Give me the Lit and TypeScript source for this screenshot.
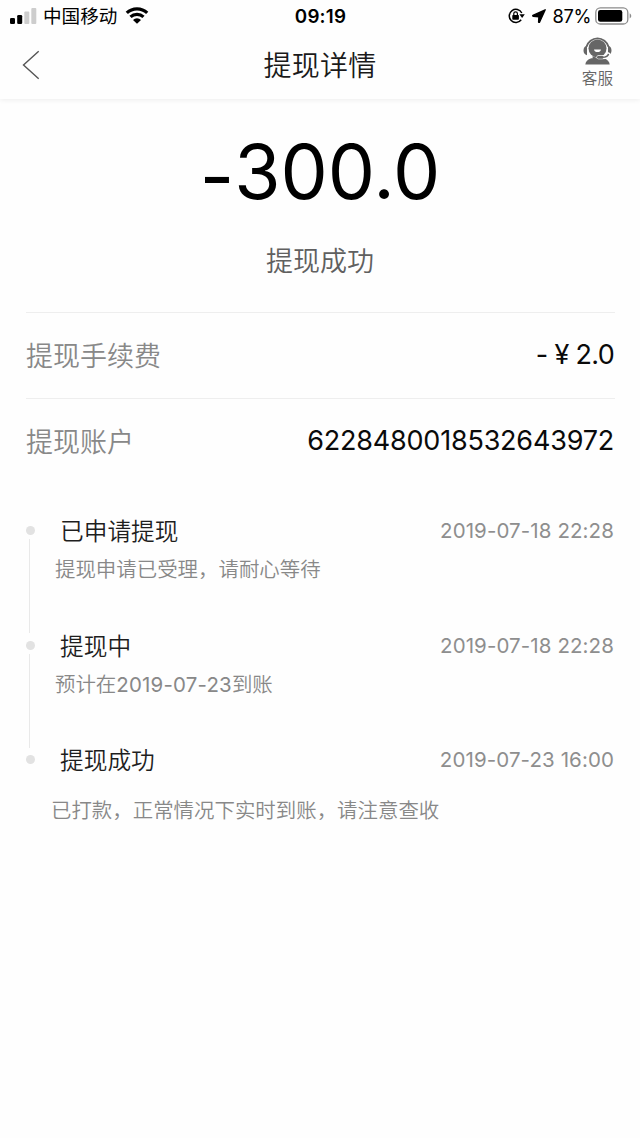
import { LitElement, html, css } from "lit";
import { customElement } from "lit/decorators.js";

interface Step {
  title: string;
  time: string;
  note: unknown;
}

const STEPS: Step[] = [
  { title: "已申请提现", time: "2019-07-18 22:28", note: "提现申请已受理，请耐心等待" },
  { title: "提现中", time: "2019-07-18 22:28", note: html`预计在<span class="date">2019-07-23</span>到账` },
  { title: "提现成功", time: "2019-07-23 16:00", note: "已打款，正常情况下实时到账，请注意查收" },
];

@customElement("status-bar")
class StatusBar extends LitElement {
  static styles = css`
    :host {
      display: grid;
      grid-template-columns: 1fr auto 1fr;
      align-items: center;
      height: 32px;
      padding: 0 9px 0 10px;
      box-sizing: border-box;
      color: #000;
    }
    svg { display: block; flex: none; }
    .left, .right { display: flex; align-items: center; }
    .right { justify-content: flex-end; margin-right: -1px; }
    .carrier { font-size: 18.6px; margin: 0 8px 0 6px; line-height: 32px; }
    .time { font-size: 18.8px; font-weight: 600; letter-spacing: 0.2px; line-height: 30px; padding-top: 2px; }
    .lock { margin-right: 7px; }
    .arrow { margin-right: 7px; }
    .percent { font-size: 18.3px; letter-spacing: -0.4px; margin-right: 4px; line-height: 32px; }
  `;
  render() {
    return html`
      <div class="left">
        <svg width="27" height="18" viewBox="0 0 27 18">
          <rect x="0" y="11" width="5" height="6" rx="1.3" />
          <rect x="7.2" y="8" width="5" height="9" rx="1.3" />
          <rect x="14.3" y="4.5" width="5" height="12.5" rx="1" fill="#cdcdcd" />
          <rect x="21.3" y="1" width="5" height="16" rx="1" fill="#cdcdcd" />
        </svg>
        <span class="carrier">中国移动</span>
        <svg width="24" height="18" viewBox="0 0 24 18">
          <path d="M1.8 5.9a14.7 14.7 0 0 1 20.4 0M5.5 9.9a9.4 9.4 0 0 1 13 0" fill="none" stroke="#000" stroke-width="3.2" />
          <path d="M12 16.8 8 12.9a5.7 5.7 0 0 1 8 0z" />
        </svg>
      </div>
      <span class="time">09:19</span>
      <div class="right">
        <svg class="lock" width="17" height="16" viewBox="0 0 17 16">
          <path d="M13.8 5A6.6 6.6 0 1 0 13.2 11.8" fill="none" stroke="#000" stroke-width="1.5" />
          <path d="M11.4 6.2h5.4l-2.7 3.7z" />
          <rect x="4.3" y="7" width="6.6" height="4.8" rx=".7" />
          <path d="M5.8 7V5.6a1.8 1.8 0 0 1 3.6 0V7" fill="none" stroke="#000" stroke-width="1.2" />
        </svg>
        <svg class="arrow" width="14" height="14" viewBox="0 0 14 14">
          <path d="M13.2.8.9 6.4q-.5.5.2.8l5.8.6-.3 5.3q.4.6.9.1z" stroke="#000" stroke-width="1.4" stroke-linejoin="round" />
        </svg>
        <span class="percent">87%</span>
        <svg width="37" height="18" viewBox="0 0 37 18">
          <rect x=".8" y=".8" width="32" height="16.2" rx="4.6" fill="none" stroke="#8b8b8b" stroke-width="1.3" />
          <rect x="3" y="3" width="24.3" height="11.8" rx="2.3" />
          <path d="M34.7 6.2q3.2 2.7 0 5.4z" fill="#8b8b8b" />
        </svg>
      </div>
    `;
  }
}

@customElement("nav-bar")
class NavBar extends LitElement {
  static styles = css`
    :host {
      display: grid;
      grid-template-columns: 1fr auto 1fr;
      align-items: center;
      height: 67px;
      padding: 0 27px 0 22px;
      box-shadow: 0 1px 5px rgba(0, 0, 0, 0.07);
      clip-path: inset(0 0 -10px 0);
      box-sizing: border-box;
    }
    svg { display: block; }
    .back { margin-bottom: 2px; }
    .title { font-size: 28px; font-weight: 350; color: #1a1a1a; line-height: 40px; margin: 0 -5px 0 0; letter-spacing: 0.3px; }
    .service {
      justify-self: end;
      display: flex;
      flex-direction: column;
      align-items: center;
      gap: 2px;
      color: #666;
      font-size: 15.6px;
      font-weight: 350;
      line-height: 22px;
      padding-bottom: 6px;
    }
  `;
  render() {
    return html`
      <svg class="back" width="18" height="30" viewBox="0 0 18 30">
        <path d="M16.7 1.2 1.5 15l15.2 13.8" fill="none" stroke="#555" stroke-width="1.4" />
      </svg>
      <h1 class="title">提现详情</h1>
      <div class="service">
        <svg width="29" height="30" viewBox="0 0 29 30">
          <path d="M3.5 10.8a11.4 11.4 0 0 1 22 0" fill="none" stroke="#666" stroke-width="1.9" />
          <path d="M4 9.8v9.4Q.5 18.4.5 14.5T4 9.8zM25 9.8v9.4q3.5-.8 3.5-4.7T25 9.8z" fill="#666" />
          <path d="M2.3 28.6q.4-4.8 6-6.4h12.4q5.6 1.6 6 6.4z" fill="#666" />
          <circle cx="14.5" cy="12.4" r="9" fill="#666" />
          <path d="M9.6 20q5 3.5 9.8 0v3.6H9.6z" fill="#666" />
          <path d="M11 13.4h7q-.6 2.7-3.5 2.7T11 13.4z" fill="#fff" />
          <path d="M25.2 18.2q-.6 3.1-6 3.1h-3.8" fill="none" stroke="#fff" stroke-width="4" stroke-linecap="round" />
          <path d="M25.5 17.8q-.6 3.4-6.2 3.5" fill="none" stroke="#666" stroke-width="1.6" />
          <rect x="14" y="20" width="6.4" height="2.7" rx="1.2" fill="#666" />
        </svg>
        <span>客服</span>
      </div>
    `;
  }
}

@customElement("step-list")
class StepList extends LitElement {
  static styles = css`
    :host { display: block; padding: 0 26px 0 25px; }
    .step { display: grid; grid-template-columns: 10px 1fr; height: 114.5px; }
    .rail { display: flex; flex-direction: column; align-items: center; padding-top: 14px; }
    .dot { width: 9px; height: 9px; border-radius: 50%; background: #e2e2e2; flex: none; }
    .line { width: 1.5px; height: 94px; margin: 4px 1px 0 0; background: #e9e9e9; }
    .head { display: flex; justify-content: space-between; align-items: center; height: 36px; padding-left: 25px; }
    .title { font-size: 23.7px; font-weight: 350; color: #1e1e1e; }
    .time { font-size: 20.5px; font-weight: 380; color: #8e8e8e; letter-spacing: 0.1px; padding-top: 1px; }
    .note { font-size: 20.45px; font-weight: 350; line-height: 30px; color: #888; padding: 7px 0 0 20px; white-space: nowrap; }
    .date { font-weight: 380; letter-spacing: 0.2px; }
    .step:last-child .note { padding: 19px 0 0 16px; }
  `;
  render() {
    return html`${STEPS.map(
      (s, i) => html`
        <div class="step">
          <div class="rail">
            <div class="dot"></div>
            ${i < STEPS.length - 1 ? html`<div class="line"></div>` : ""}
          </div>
          <div>
            <div class="head"><span class="title">${s.title}</span><span class="time">${s.time}</span></div>
            <div class="note">${s.note}</div>
          </div>
        </div>
      `
    )}`;
  }
}

@customElement("app-root")
class AppRoot extends LitElement {
  static styles = css`
    :host {
      display: block;
      height: 1138px;
      overflow: hidden;
      background: #fefefe;
      font-family: Inter, "Noto Sans CJK SC", sans-serif;
    }
    .summary { height: 213px; display: flex; flex-direction: column; align-items: center; }
    .amount { display: flex; font-size: 75px; line-height: 90px; margin-top: 28px; color: #000; }
    .sign { padding-top: 4px; }
    .state { font-size: 27px; font-weight: 350; line-height: 40px; margin-top: 21px; color: #606060; }
    .row {
      display: flex;
      justify-content: space-between;
      align-items: center;
      height: 86px;
      box-sizing: border-box;
      margin: 0 25px 0 26px;
      border-top: 1px solid #eee;
      font-size: 27px;
    }
    .label { color: #888; font-weight: 350; padding-bottom: 2px; }
    .value { color: #0a0a0a; padding-bottom: 2px; margin-right: 1px; }
    .fee { letter-spacing: -0.7px; }
    .number { letter-spacing: -0.2px; }
    .steps { margin-top: 28px; }
  `;
  render() {
    return html`
      <status-bar></status-bar>
      <nav-bar></nav-bar>
      <div class="summary">
        <div class="amount"><span class="sign">-</span><span>300.0</span></div>
        <div class="state">提现成功</div>
      </div>
      <div class="row"><span class="label">提现手续费</span><span class="value fee">-&nbsp;¥&nbsp;2.0</span></div>
      <div class="row"><span class="label">提现账户</span><span class="value number">6228480018532643972</span></div>
      <step-list class="steps"></step-list>
    `;
  }
}
